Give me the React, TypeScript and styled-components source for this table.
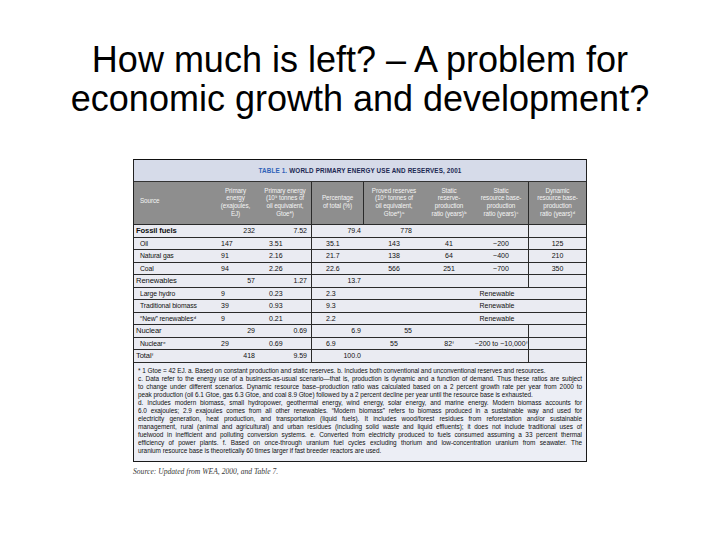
import styled, { createGlobalStyle } from 'styled-components';

const COLS = '78px 47px 53px 52px 60px 50px 55px 57px';

const GlobalStyle = createGlobalStyle`
  *, *::before, *::after { box-sizing: border-box; }
  html, body { margin: 0; padding: 0; background: #fff; }
`;

const Slide = styled.div`
  width: 720px;
  height: 540px;
  background: #fff;
  overflow: hidden;
  display: flex;
  flex-direction: column;
  align-items: center;
`;

const Title = styled.h1`
  margin: 40px 0 0;
  font-family: "Liberation Sans", Arial, sans-serif;
  font-weight: normal;
  font-size: 36px;
  line-height: 39px;
  text-align: center;
  color: #000;
`;

const Figure = styled.div`
  margin-top: 41px;
  width: 454px;
  font-family: "Liberation Sans", Arial, sans-serif;
  color: #111;
`;

const TableFrame = styled.div`
  border-top: 1.5px solid #111;
  border-left: 1px solid #222;
  border-right: 1px solid #222;
  background: #eaebf2;
`;

const Caption = styled.div`
  height: 22px;
  background: #d6dbe9;
  display: flex;
  align-items: center;
  justify-content: center;
  font-size: 6.3px;
  font-weight: bold;
  letter-spacing: 0.15px;
  color: #1b2852;
  border-bottom: 1px solid #333;
`;

const CaptionLabel = styled.span`
  color: #2f62b8;
  margin-right: 2px;
`;

const HeadRow = styled.div`
  display: grid;
  grid-template-columns: ${COLS};
  height: 43px;
  background: #8e8e8e;
  color: #f4f4f4;
  font-size: 6.3px;
  line-height: 7.6px;
  border-bottom: 1px solid #2a2a2a;
`;

const HeadCell = styled.div<{ $rule?: boolean; $left?: boolean }>`
  display: flex;
  flex-direction: column;
  justify-content: center;
  align-items: ${p => (p.$left ? 'flex-start' : 'center')};
  text-align: ${p => (p.$left ? 'left' : 'center')};
  padding: ${p => (p.$left ? '0 3px 4px 6px' : '0 1px 2px')};
  border-right: ${p => (p.$rule ? '1px solid #2a2a2a' : 'none')};
  white-space: nowrap;
  letter-spacing: -0.1px;
`;

const Row = styled.div`
  display: grid;
  grid-template-columns: ${COLS};
  height: 12.5px;
  border-bottom: 1px solid #2a2a2a;
  font-size: 7px;
`;

const Cell = styled.div<{
  $align?: 'left' | 'right' | 'center';
  $pl?: number;
  $pr?: number;
  $rule?: boolean;
  $span?: string;
}>`
  display: flex;
  align-items: center;
  justify-content: ${p =>
    p.$align === 'right' ? 'flex-end' : p.$align === 'center' ? 'center' : 'flex-start'};
  padding-left: ${p => p.$pl ?? 0}px;
  padding-right: ${p => p.$pr ?? 0}px;
  border-right: ${p => (p.$rule ? '1px solid #2a2a2a' : 'none')};
  grid-column: ${p => p.$span ?? 'auto'};
  white-space: nowrap;
`;

const Label = styled.span<{ $group?: boolean; $bold?: boolean }>`
  font-size: ${p => (p.$group ? '7.6px' : '6.8px')};
  font-weight: ${p => (p.$bold ? 'bold' : 'normal')};
  letter-spacing: -0.1px;
`;

const Sup = styled.sup`
  font-size: 4.2px;
  line-height: 0;
  vertical-align: 2px;
  margin-left: 0.5px;
`;

const Notes = styled.div`
  border: 1px solid #1a1a1a;
  border-top: none;
  background: #eceef5;
  padding: 4px 4px 5px 4px;
  font-size: 6.45px;
  line-height: 8.1px;
  color: #111;
`;

const NoteLine = styled.div<{ $fill?: boolean }>`
  white-space: nowrap;
  letter-spacing: -0.05px;
  text-align: ${p => (p.$fill ? 'justify' : 'left')};
  text-align-last: ${p => (p.$fill ? 'justify' : 'left')};
  white-space: ${p => (p.$fill ? 'normal' : 'nowrap')};
`;

const SourceLine = styled.div`
  margin-top: 5px;
  font-family: "Liberation Serif", "Times New Roman", serif;
  font-style: italic;
  font-size: 7.6px;
  color: #3a3a3a;
`;

type Line = { text: string; sup?: string };

const headers: { lines: Line[]; rule?: boolean; left?: boolean }[] = [
  { lines: [{ text: 'Source' }], left: true },
  { lines: [{ text: 'Primary' }, { text: 'energy' }, { text: '(exajoules,' }, { text: 'EJ)' }] },
  {
    lines: [{ text: 'Primary energy' }, { text: '(10⁹ tonnes of' }, { text: 'oil equivalent,' }, { text: 'Gtoe*)' }],
    rule: true,
  },
  { lines: [{ text: 'Percentage' }, { text: 'of total (%)' }], rule: true },
  {
    lines: [
      { text: 'Proved reserves' },
      { text: '(10⁹ tonnes of' },
      { text: 'oil equivalent,' },
      { text: 'Gtoe*)', sup: 'a' },
    ],
  },
  { lines: [{ text: 'Static' }, { text: 'reserve-' }, { text: 'production' }, { text: 'ratio (years)', sup: 'b' }] },
  {
    lines: [{ text: 'Static' }, { text: 'resource base-' }, { text: 'production' }, { text: 'ratio (years)', sup: 'c' }],
    rule: true,
  },
  {
    lines: [{ text: 'Dynamic' }, { text: 'resource base-' }, { text: 'production' }, { text: 'ratio (years)', sup: 'd' }],
  },
];

type DataRow = {
  group?: boolean;
  bold?: boolean;
  label: string;
  sup?: string;
  ej?: string;
  gtoe?: string;
  pct?: string;
  proved?: string;
  sres?: string;
  sresSup?: string;
  sbase?: string;
  sbaseSup?: string;
  dyn?: string;
  renewable?: boolean;
};

const rows: DataRow[] = [
  { group: true, bold: true, label: 'Fossil fuels', ej: '232', gtoe: '7.52', pct: '79.4', proved: '778' },
  { label: 'Oil', ej: '147', gtoe: '3.51', pct: '35.1', proved: '143', sres: '41', sbase: '~200', dyn: '125' },
  { label: 'Natural gas', ej: '91', gtoe: '2.16', pct: '21.7', proved: '138', sres: '64', sbase: '~400', dyn: '210' },
  { label: 'Coal', ej: '94', gtoe: '2.26', pct: '22.6', proved: '566', sres: '251', sbase: '~700', dyn: '350' },
  { group: true, label: 'Renewables', ej: '57', gtoe: '1.27', pct: '13.7' },
  { label: 'Large hydro', ej: '9', gtoe: '0.23', pct: '2.3', renewable: true },
  { label: 'Traditional biomass', ej: '39', gtoe: '0.93', pct: '9.3', renewable: true },
  { label: '“New” renewables', sup: 'd', ej: '9', gtoe: '0.21', pct: '2.2', renewable: true },
  { group: true, label: 'Nuclear', ej: '29', gtoe: '0.69', pct: '6.9', proved: '55' },
  {
    label: 'Nuclear',
    sup: 'e',
    ej: '29',
    gtoe: '0.69',
    pct: '6.9',
    proved: '55',
    sres: '82',
    sresSup: 'f',
    sbase: '~200 to ~10,000',
    sbaseSup: 'f',
  },
  { group: true, label: 'Total', sup: 'f', ej: '418', gtoe: '9.59', pct: '100.0' },
];

const notes: { text: string; fill?: boolean }[] = [
  { text: '* 1 Gtoe = 42 EJ. a. Based on constant production and static reserves. b. Includes both conventional and unconventional reserves and resources.' },
  { text: 'c. Data refer to the energy use of a business-as-usual scenario—that is, production is dynamic and a function of demand. Thus these ratios are subject', fill: true },
  { text: 'to change under different scenarios. Dynamic resource base–production ratio was calculated based on a 2 percent growth rate per year from 2000 to', fill: true },
  { text: 'peak production (oil 6.1 Gtoe, gas 6.3 Gtoe, and coal 8.9 Gtoe) followed by a 2 percent decline per year until the resource base is exhausted.' },
  { text: 'd. Includes modern biomass, small hydropower, geothermal energy, wind energy, solar energy, and marine energy. Modern biomass accounts for', fill: true },
  { text: '6.0 exajoules; 2.9 exajoules comes from all other renewables. “Modern biomass” refers to biomass produced in a sustainable way and used for', fill: true },
  { text: 'electricity generation, heat production, and transportation (liquid fuels). It includes wood/forest residues from reforestation and/or sustainable', fill: true },
  { text: 'management, rural (animal and agricultural) and urban residues (including solid waste and liquid effluents); it does not include traditional uses of', fill: true },
  { text: 'fuelwood in inefficient and polluting conversion systems. e. Converted from electricity produced to fuels consumed assuming a 33 percent thermal', fill: true },
  { text: 'efficiency of power plants. f. Based on once-through uranium fuel cycles excluding thorium and low-concentration uranium from seawater. The', fill: true },
  { text: 'uranium resource base is theoretically 60 times larger if fast breeder reactors are used.' },
];

function TableRow({ row }: { row: DataRow }) {
  const g = row.group;
  return (
    <Row>
      <Cell $pl={g ? 2 : 6}>
        <Label $group={g} $bold={row.bold}>
          {row.label}
          {row.sup && <Sup>{row.sup}</Sup>}
        </Label>
      </Cell>
      <Cell $align={g ? 'right' : 'left'} $pl={g ? 0 : 9} $pr={g ? 4 : 0}>
        {row.ej}
      </Cell>
      <Cell $rule $align={g ? 'right' : 'left'} $pl={g ? 0 : 10} $pr={g ? 4 : 0}>
        {row.gtoe}
      </Cell>
      <Cell $align={g ? 'right' : 'left'} $pl={g ? 0 : 14} $pr={g ? 3 : 0}>
        {row.pct}
      </Cell>
      {row.renewable ? (
        <>
          <Cell />
          <Cell $span="6 / span 3" $align="center" $pr={16}>
            Renewable
          </Cell>
        </>
      ) : (
        <>
          <Cell $align={g ? 'right' : 'center'} $pr={g ? 12 : 0}>
            {row.proved}
          </Cell>
          <Cell $align="center">
            {row.sres}
            {row.sresSup && <Sup>{row.sresSup}</Sup>}
          </Cell>
          <Cell $align="center" $rule>
            {row.sbase}
            {row.sbaseSup && <Sup>{row.sbaseSup}</Sup>}
          </Cell>
          <Cell $align="center">{row.dyn}</Cell>
        </>
      )}
    </Row>
  );
}

export default function App() {
  return (
    <>
      <GlobalStyle />
      <Slide>
        <Title>
          How much is left? – A problem for
          <br />
          economic growth and development?
        </Title>
        <Figure>
          <TableFrame>
            <Caption>
              <CaptionLabel>TABLE 1.</CaptionLabel>WORLD PRIMARY ENERGY USE AND RESERVES, 2001
            </Caption>
            <HeadRow>
              {headers.map((h, i) => (
                <HeadCell key={i} $rule={h.rule} $left={h.left}>
                  {h.lines.map((l, j) => (
                    <span key={j}>
                      {l.text}
                      {l.sup && <Sup>{l.sup}</Sup>}
                    </span>
                  ))}
                </HeadCell>
              ))}
            </HeadRow>
            {rows.map((r, i) => (
              <TableRow key={i} row={r} />
            ))}
          </TableFrame>
          <Notes>
            {notes.map((n, i) => (
              <NoteLine key={i} $fill={n.fill}>
                {n.text}
              </NoteLine>
            ))}
          </Notes>
          <SourceLine>Source: Updated from WEA, 2000, and Table 7.</SourceLine>
        </Figure>
      </Slide>
    </>
  );
}
